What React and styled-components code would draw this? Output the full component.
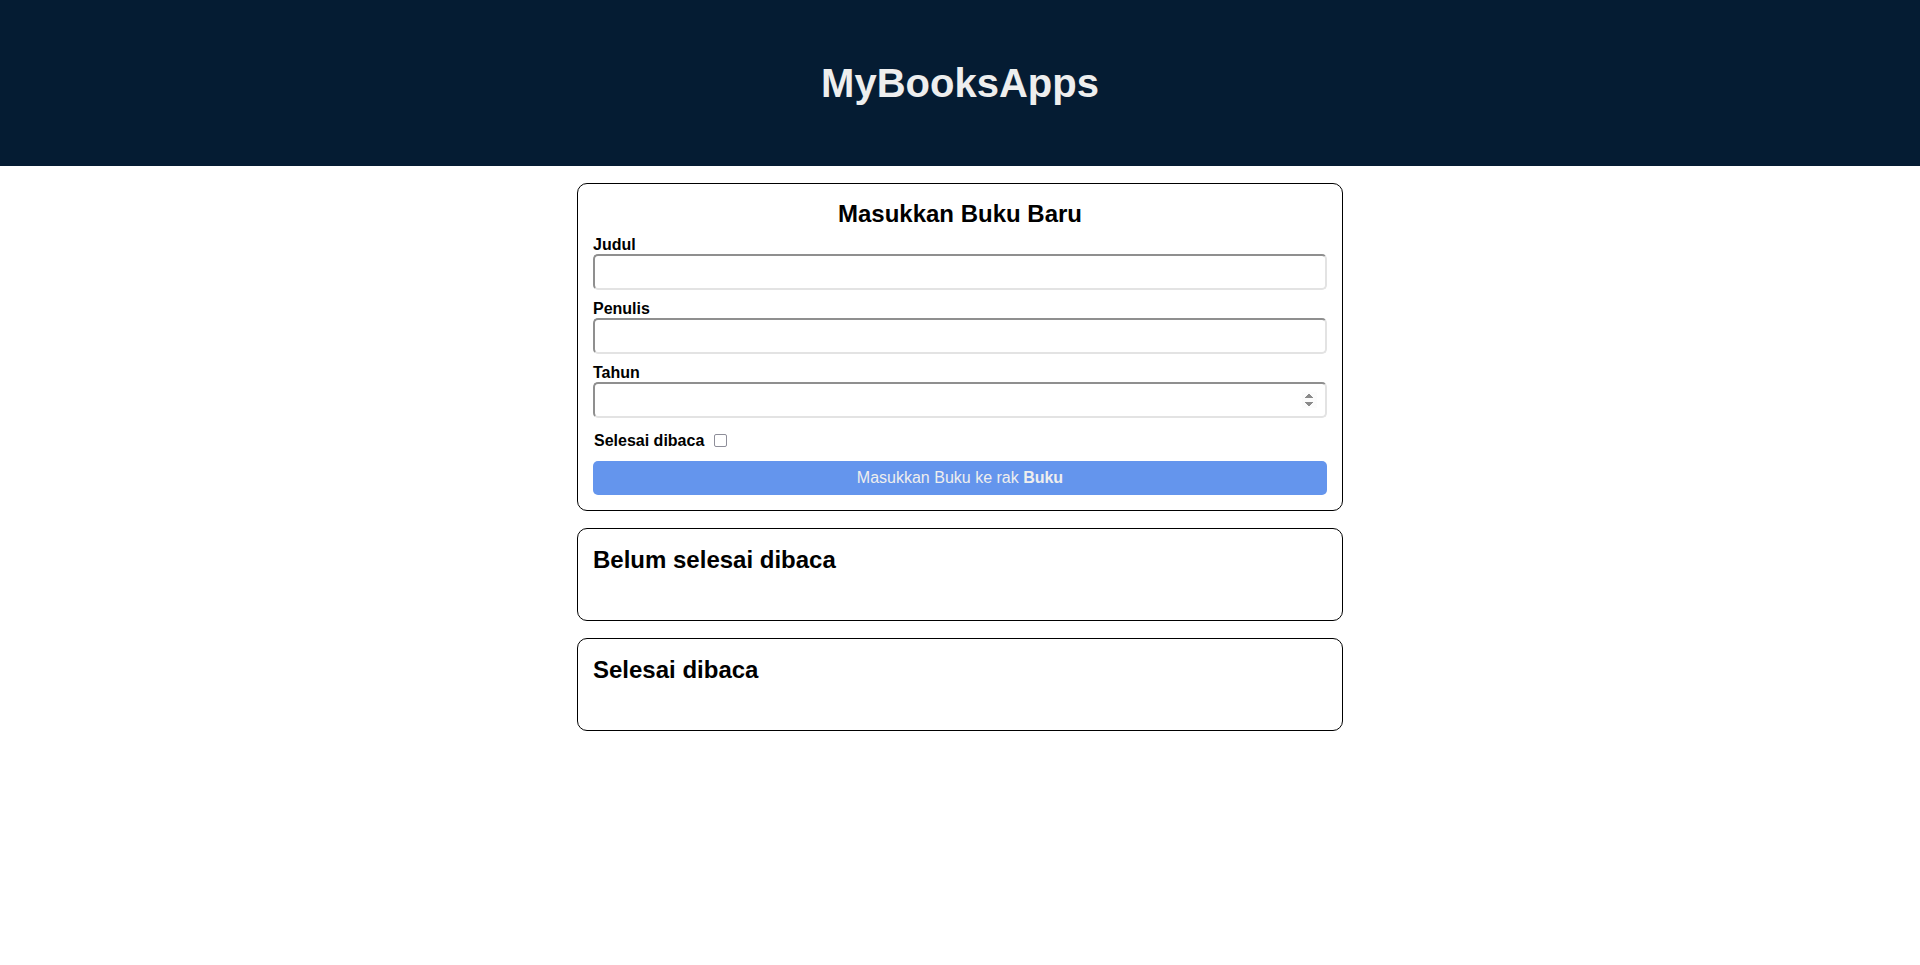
import React, { useState } from 'react';
import styled, { createGlobalStyle } from 'styled-components';

function App() {
  const [title, setTitle] = useState('');
  const [author, setAuthor] = useState('');
  const [year, setYear] = useState('');
  const [isComplete, setIsComplete] = useState(false);

  return (
    <>
      <GlobalStyle />
      <Header>
        <AppTitle>MyBooksApps</AppTitle>
      </Header>
      <Main>
        <Card>
          <FormTitle>Masukkan Buku Baru</FormTitle>
          <form onSubmit={(e) => e.preventDefault()}>
            <Field>
              <Label htmlFor="inputBookTitle">Judul</Label>
              <Input id="inputBookTitle" type="text" value={title} onChange={(e) => setTitle(e.target.value)} />
            </Field>
            <Field>
              <Label htmlFor="inputBookAuthor">Penulis</Label>
              <Input id="inputBookAuthor" type="text" value={author} onChange={(e) => setAuthor(e.target.value)} />
            </Field>
            <Field>
              <Label htmlFor="inputBookYear">Tahun</Label>
              <Input id="inputBookYear" type="number" value={year} onChange={(e) => setYear(e.target.value)} />
            </Field>
            <CheckRow>
              <CheckLabel htmlFor="inputBookIsComplete">Selesai dibaca</CheckLabel>
              <Checkbox
                id="inputBookIsComplete"
                type="checkbox"
                checked={isComplete}
                onChange={(e) => setIsComplete(e.target.checked)}
              />
            </CheckRow>
            <SubmitButton type="submit">
              Masukkan Buku ke rak <b>Buku</b>
            </SubmitButton>
          </form>
        </Card>
        <Card>
          <ShelfTitle>Belum selesai dibaca</ShelfTitle>
        </Card>
        <Card>
          <ShelfTitle>Selesai dibaca</ShelfTitle>
        </Card>
      </Main>
    </>
  );
}

export default App;

const GlobalStyle = createGlobalStyle`
  body {
    margin: 0;
    font-family: "Liberation Sans", Arial, sans-serif;
    background: #fff;
    color: #000;
  }
`;

const Header = styled('header')`
  display: flex;
  justify-content: center;
  align-items: center;
  height: 166px;
  background-color: #051c33;
`;

const AppTitle = styled('h1')`
  margin: 0;
  font-size: 40px;
  font-weight: bold;
  color: #eeeeee;
`;

const Main = styled('main')`
  display: flex;
  flex-direction: column;
  align-items: center;
  gap: 17px;
  padding-top: 17px;
`;

const Card = styled('section')`
  box-sizing: border-box;
  width: 766px;
  padding: 17px 15px 15px;
  border: 1px solid #000;
  border-radius: 10px;
`;

const FormTitle = styled('h2')`
  margin: -1px 0 8px;
  font-size: 24px;
  text-align: center;
`;

const ShelfTitle = styled('h2')`
  margin: 0 0 31px;
  font-size: 24px;
`;

const Field = styled('div')`
  margin-bottom: 10px;
`;

const Label = styled('label')`
  display: block;
  font-size: 16px;
  line-height: 18px;
  font-weight: bold;
`;

const Input = styled('input')`
  box-sizing: border-box;
  width: 100%;
  height: 36px;
  padding: 8px;
  font-family: inherit;
  font-size: 14px;
  border-width: 2px;
  border-style: solid;
  border-color: #8f8f8f #e3e3e3 #e3e3e3 #8f8f8f;
  border-radius: 5px;

  &::-webkit-inner-spin-button {
    opacity: 1;
  }
`;

const CheckRow = styled('div')`
  display: flex;
  align-items: center;
  gap: 6px;
  margin: 13px 0 11px;
`;

const CheckLabel = styled('label')`
  font-size: 16px;
  font-weight: bold;
  margin-left: 1px;
`;

const Checkbox = styled('input')`
  appearance: none;
  box-sizing: border-box;
  width: 13px;
  height: 13px;
  margin: 3px 3px 3px 4px;
  border: 1.5px solid #8e8e99;
  border-radius: 2px;
  background: #fff;
  cursor: pointer;

  &:checked {
    background: #0075ff;
    border-color: #0075ff;
  }
`;

const SubmitButton = styled('button')`
  display: block;
  width: 100%;
  padding: 8px;
  border: none;
  border-radius: 5px;
  background-color: cornflowerblue;
  color: #eeeeee;
  font-family: inherit;
  font-size: 16px;
  cursor: pointer;
`;
